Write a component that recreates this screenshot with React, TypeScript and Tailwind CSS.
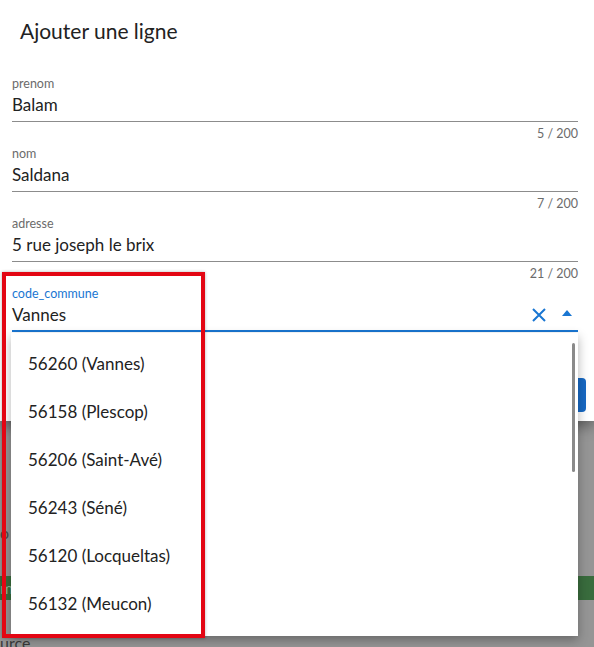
type Field = { label: string; value: string; count: number; max: number };

const fields: Field[] = [
  { label: "prenom", value: "Balam", count: 5, max: 200 },
  { label: "nom", value: "Saldana", count: 7, max: 200 },
  { label: "adresse", value: "5 rue joseph le brix", count: 21, max: 200 },
];

const communes = [
  "56260 (Vannes)",
  "56158 (Plescop)",
  "56206 (Saint-Avé)",
  "56243 (Séné)",
  "56120 (Locqueltas)",
  "56132 (Meucon)",
];

function TextField({ label, value, count, max }: Field) {
  return (
    <div className="mb-[5px] px-3">
      <div className="border-b border-[#8c8c8c] pb-[5px]">
        <div className="text-[12.5px] leading-[16px] text-[#6b6b6b]">{label}</div>
        <div className="pt-[1px] text-[17px] leading-[23px] text-[#222]">{value}</div>
      </div>
      <div className="mt-[5px] text-right text-[12.5px] leading-[14px] text-[#6b6b6b]">
        {count} / {max}
      </div>
    </div>
  );
}

function CommuneField() {
  return (
    <div className="px-3">
      <div className="flex items-end border-b-2 border-[#1976d2] pb-[4px]">
        <div className="flex-1">
          <div className="text-[12.5px] leading-[16px] text-[#1976d2]">code_commune</div>
          <div className="pt-[1px] text-[17px] leading-[23px] text-[#222]">Vannes</div>
        </div>
        <div className="flex h-[24px] items-center gap-[16px] pr-[6px]">
          <svg width="14" height="14" viewBox="0 0 14 14" className="mt-[2px]">
            <path d="M1 1 L13 13 M13 1 L1 13" stroke="#1976d2" strokeWidth="2" strokeLinecap="butt" />
          </svg>
          <svg width="10" height="6" viewBox="0 0 10 6" className="mb-[2px]">
            <path d="M0 6 L5 0 L10 6 Z" fill="#1976d2" />
          </svg>
        </div>
      </div>
    </div>
  );
}

export default function App() {
  return (
    <div
      className="relative h-[647px] w-[594px] overflow-hidden bg-[#959595]"
      style={{ fontFamily: "Lato, 'Noto Sans', sans-serif" }}
    >
      {/* page behind the backdrop */}
      <div className="flex h-full flex-col pt-[520px]">
        <div className="h-[26px] text-[16px] leading-[26px] text-[#4a4a4a]">o</div>
        <div className="mt-[30px] flex h-[40px] items-center bg-[#396c3d] text-[16px] text-[#8fb592]">m</div>
        <div className="mt-[33px] text-[16px] leading-[20px] text-[#3a3a3a]">urce</div>
      </div>

      {/* dialog */}
      <div className="absolute left-0 top-0 h-[421px] w-[594px] bg-white shadow-[0_6px_12px_rgba(0,0,0,0.35)]">
        <h2 className="mb-[31px] px-5 pt-[17px] text-[21px] leading-[28px] text-[#222]">
          Ajouter une ligne
        </h2>
        <div className="w-[590px]">
          {fields.map((f) => (
            <TextField key={f.label} {...f} />
          ))}
          <CommuneField />
        </div>
        <div className="mt-[46px] flex justify-end pr-[8px]">
          <div className="h-[34px] w-[110px] rounded-[4px] bg-[#1769c4]" />
        </div>
      </div>

      {/* autocomplete list */}
      <div className="absolute left-[11px] top-[333px] flex h-[303px] w-[567px] bg-white shadow-[0_4px_10px_rgba(0,0,0,0.3)]">
        <ul className="flex-1 pt-[7px]">
          {communes.map((c) => (
            <li key={c} className="flex h-[48px] items-center pl-[17px] text-[17px] text-[#222]">
              {c}
            </li>
          ))}
        </ul>
        <div className="mr-[3px] mt-[10px] h-[129px] w-[3px] rounded-full bg-[#8a8a8a]" />
      </div>

      {/* highlight frame */}
      <div className="absolute left-[2px] top-[272px] h-[366px] w-[203px] border-4 border-[#e30613] shadow-[0_0_3px_rgba(0,0,0,0.3)]" />
    </div>
  );
}
